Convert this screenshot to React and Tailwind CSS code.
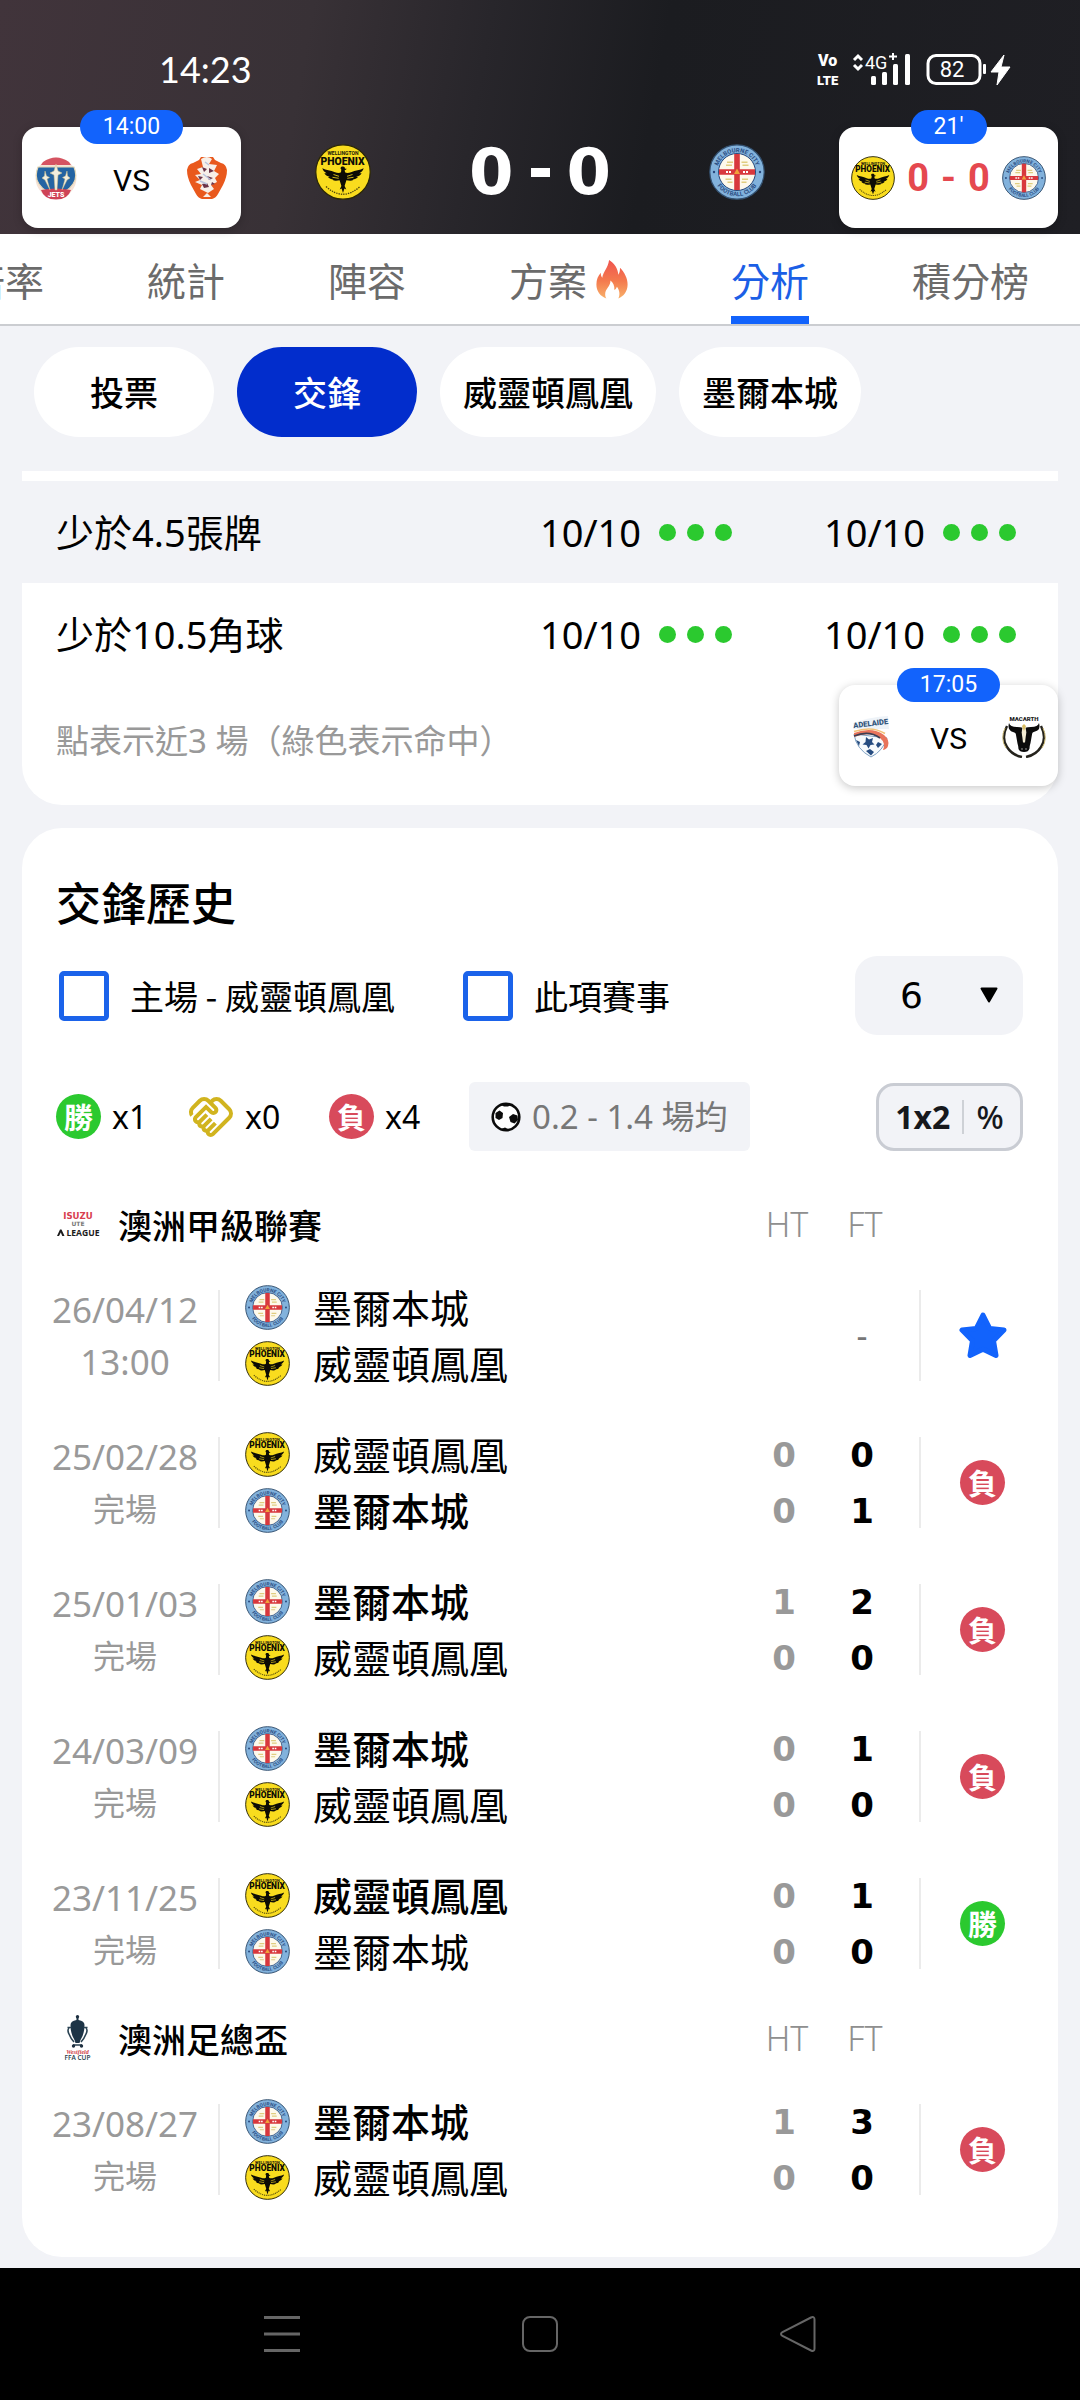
import React from 'react';
import { MdOutlineHandshake } from 'react-icons/md';

const CJK = "font-['Noto_Sans_CJK_TC',sans-serif]";
const MIX = "font-['Noto_Sans','Noto_Sans_CJK_TC',sans-serif]";

function PhoenixLogo({ className }) {
  return (
    <svg viewBox="0 0 56 56" className={className} role="img" aria-label="威靈頓鳳凰">
      <circle cx="28" cy="28" r="27.2" fill="#f9dc1e" stroke="#2b2705" strokeWidth="1.2" />
      <text x="28" y="11" textAnchor="middle" fontFamily="Roboto, sans-serif" fontWeight="700" fontSize="5" fill="#17150a">WELLINGTON</text>
      <text x="27.500" y="20.500" textAnchor="middle" fontFamily="Roboto, sans-serif" fontWeight="900" fontSize="10.400" fill="#0d0c05">PHOENIX</text>
      <path fill="#0d0c05" d="M28 22.5c1.2 0 2 .9 1.9 2 .8.3 1.5.3 1.8.3-.4.9-1.1 1.3-2 1.3l.3 2.2c1.5 1 3.600.8 6-.1 4.500-1.700 9-2.100 12.700-3.900-.6 2.300-2.200 3.900-4.400 4.900.9 0 1.700-.1 2.300-.3-.9 2.100-2.800 3.300-5.300 3.900.6.2 1.200.2 1.700.1-1.200 1.700-3.200 2.300-5.500 2.300.4.300.8.400 1.200.5-2.300 1.500-5 .9-7.300.5L29.600 42l1.700 3.500-1.900-.9L28 49l-1.400-4.400-1.900.9 1.700-3.500-1.800-5.800c-2.300.4-5 1-7.300-.5.4-.1.8-.2 1.200-.5-2.300 0-4.300-.6-5.500-2.300.5.100 1.100.1 1.700-.1-2.500-.6-4.400-1.800-5.300-3.900.6.200 1.400.3 2.300.3-2.200-1-3.800-2.600-4.400-4.900 3.700 1.800 8.200 2.200 12.700 3.900 2.400.9 4.500 1.100 6 .1l.3-2.800c-.6-.3-.7-.8-.7-1.300 0-1.100.9-1.700 1.900-1.700Z" />
      <path d="M18.500 30.500l5.500 1.800M17.500 33.300l6.200 1M37.500 30.500l-5.500 1.800M38.500 33.300l-6.200 1" stroke="#f9dc1e" strokeWidth=".8" />
      <path d="M11 42.500Q28 58 45 42.500" fill="none" stroke="#4d450c" strokeWidth="1.300" strokeDasharray="1.400 1" />
    </svg>
  );
}

function CityLogo({ className }) {
  return (
    <svg viewBox="0 0 56 56" className={className} role="img" aria-label="墨爾本城">
      <defs>
        <path id="city-top" d="M8.200 28a19.800 19.800 0 0 1 39.600 0" />
        <path id="city-bottom" d="M3.900 28a24.100 24.100 0 0 0 48.200 0" />
      </defs>
      <circle cx="28" cy="28" r="27.200" fill="#82b2dc" stroke="#33506f" strokeWidth="1.200" />
      <text fontFamily="Roboto, sans-serif" fontWeight="700" fontSize="6" fill="#2c4f84" textAnchor="middle">
        <textPath href="#city-top" startOffset="50%">MELBOURNE CITY</textPath>
      </text>
      <text fontFamily="Roboto, sans-serif" fontWeight="700" fontSize="6" fill="#2c4f84" textAnchor="middle">
        <textPath href="#city-bottom" startOffset="50%">FOOTBALL CLUB</textPath>
      </text>
      <circle cx="28" cy="28" r="18.500" fill="#fdf9ec" stroke="#27477b" strokeWidth="1" />
      <path d="M18 17.500h6v1.500h-6zM17 20.500h6v1.500h-6zM32.500 17.500h6v1.500h-6zM33.500 20.500h6v1.500h-6zM16.500 34.500h6v1.500h-6zM18.500 37.500h5v1.500h-5zM33 34.500h6v1.500h-6zM32.500 37.500h5v1.500h-5z" fill="#e0cd7f" />
      <path d="M25.200 10h5.600v36h-5.600zM10 25.300h36v5.400H10z" fill="#d8383d" />
      <path d="M28 24.500l3 5.500h-6z" fill="#f0a23a" />
      <path d="M17 28h5M34 28h5" stroke="#fff" strokeWidth="2" strokeDasharray="2 1" />
      <circle cx="5" cy="28" r="1.200" fill="#27477b" />
      <circle cx="51" cy="28" r="1.200" fill="#27477b" />
    </svg>
  );
}

function JetsLogo({ className }) {
  return (
    <svg viewBox="0 0 44 44" className={className} role="img" aria-label="Newcastle Jets">
      <circle cx="22" cy="22" r="20.500" fill="#f6e3d6" />
      <path d="M9 6Q22-3 35 6l2 3H7z" fill="#d55362" />
      <path d="M4 11h36q4 10-1 17-6 9-17 9T5 28Q0 21 4 11Z" fill="#2464a3" stroke="#e5d9b8" strokeWidth="1.200" />
      <path d="M7 34q15-3 30 0-3 9.500-15 9.500T7 34Z" fill="#cf4357" />
      <text x="22" y="41" textAnchor="middle" fontFamily="Roboto, sans-serif" fontWeight="900" fontSize="7" fill="#fff">JETS</text>
      <path d="M22 8l2 7 4 2-4 2-1 15h-2l-1-15-4-2 4-2zM11 15l1.500 5 3 1.500-2.500 1.500 3 11-5-10-3-2 2.500-2zM33 15l-1.500 5-3 1.500 2.500 1.500-3 11 5-10 3-2-2.500-2z" fill="#f3efdf" stroke="#d5c38b" strokeWidth=".5" />
    </svg>
  );
}

function RoarLogo({ className }) {
  return (
    <svg viewBox="0 0 44 44" className={className} role="img" aria-label="Brisbane Roar">
      <path d="M16 1h12l2 3 6 3q5 1 6 7 0 7-4 15l-5 9q-2 4-6 5H17q-4-1-6-5l-5-9Q2 21 2 14q1-6 6-7l6-3z" fill="#e9591d" />
      <path d="M16 3q6-4 11 0l-3 5 8 1-3 6 5 3-4 4 2 4-6 3 3 4-6 4-8-4 2-4-7-3 5-2-5-5 6-1-4-5 6-2z" fill="#f7efe8" />
      <path d="M17 11l5 2-3 3zM24 12l5 3-5 2zM13 20l5 1-3 3zM22 20l6 2-4 2zM17 28l5-1 2 4-5 1zM27 26l3 2-4 1z" fill="#6b3347" />
      <path d="M20 6l4 3M18 18l8 6M15 25l7 3" stroke="#b9c4dc" strokeWidth="1.500" />
      <path d="M18 41l4-4 4 4z" fill="#f7efe8" />
    </svg>
  );
}

function AdelaideLogo({ className }) {
  return (
    <svg viewBox="0 0 44 44" className={className} role="img" aria-label="Adelaide United">
      <path d="M2 9q17-6 35-7l1 13H4z" fill="#eef3f8" />
      <text x="20" y="12" textAnchor="middle" transform="rotate(-7 20 12)" fontFamily="Roboto, sans-serif" fontWeight="900" fontSize="7.600" fill="#33577c">ADELAIDE</text>
      <path d="M3 20q2 15 17 23 12-6 16-19z" fill="#f7fafc" stroke="#7fa2c4" strokeWidth="1" />
      <path d="M3 19q18-7 30 2 6 5 4 11-1 3-5 4 3-7-3-12-10-7-26-1z" fill="#e8745b" />
      <path d="M3 22q15-6 26 2" fill="none" stroke="#3a3f55" strokeWidth="1.600" />
      <path d="M3 17.500q18-6 31 2" fill="none" stroke="#f2c37a" strokeWidth="1.600" />
      <path d="M15 23l3 2.500 4-1.500-1 4 2.500 2.500-4 .5-2 3.500-2-3.500-4-.5 3-2.500zM5 26l4 2-1 4zM27 28l4 2-4 4-2-3zM15 37l4-2 4 3-3 3.500z" fill="#264c80" />
    </svg>
  );
}

function BullLogo({ className }) {
  return (
    <svg viewBox="0 0 44 44" className={className} role="img" aria-label="Macarthur FC">
      <text x="22" y="6.500" textAnchor="middle" fontFamily="Roboto, sans-serif" fontWeight="900" fontSize="6" fill="#222">MACARTH</text>
      <path d="M5 12Q-1 24 5 33q5 8 15 10M39 12q6 12 0 21-5 8-15 10" fill="none" stroke="#25231c" strokeWidth="2.400" />
      <path d="M3 14Q-2 25 4 34M41 14q5 11-1 20" fill="none" stroke="#c9b773" strokeWidth="1" />
      <path d="M7 9q1 4 8 4 3 0 7 1 4-1 7-1 7 0 8-4 2 7-4 8.500-3 .5-3 3l-1.500 8.500q-1 3-1 5.500-1 3.500-5.500 3.500T16.500 35q0-2.500-1-5.500L14 21q0-2.500-3-3Q5 16 7 9Z" fill="#0b0b0b" />
      <path d="M20.500 12.500h3l.8 6-1.300 10h-2l-1.300-10z" fill="#f4ecd4" />
      <path d="M20 12l2-2 2 2-2 5z" fill="#d8bd62" />
      <circle cx="20" cy="35" r=".9" fill="#777" />
      <circle cx="24" cy="35" r=".9" fill="#777" />
    </svg>
  );
}

function ALeagueLogo() {
  return (
    <svg viewBox="0 0 45 45" className="size-[45px]" role="img" aria-label="A-League">
      <text x="22" y="17" textAnchor="middle" fontFamily="'DejaVu Sans', sans-serif" fontWeight="700" fontSize="8.600" fill="#d8404f">ISUZU</text>
      <text x="22" y="23.500" textAnchor="middle" fontFamily="'DejaVu Sans', sans-serif" fontSize="6" fill="#777">UTE</text>
      <path d="M1 34l3-6.500h1.500L8.500 34H6.300l-1.500-3.500L3 34z" fill="#1c1c1c" />
      <text x="27" y="34" textAnchor="middle" fontFamily="'Open Sans', sans-serif" fontWeight="700" fontSize="8.600" fill="#1c1c1c">LEAGUE</text>
    </svg>
  );
}

function CupLogo() {
  return (
    <svg viewBox="0 0 45 47" className="h-[47px] w-[45px]" role="img" aria-label="FFA Cup">
      <circle cx="21.500" cy="1.800" r="1.700" fill="#1d2f40" />
      <path d="M20.500 3h2v2q6 1 6 5 0 9-4 15l-1 3h-4l-1-3q-4-6-4-15 0-4 6-5z" fill="#1d3446" />
      <path d="M13 13q-2 2 0 6 2 5 5 8M30 13q2 2 0 6-2 5-5 8" fill="none" stroke="#2b4353" strokeWidth="1.600" />
      <path d="M11.500 12.500h4M27.500 12.500h4M17 30h9" stroke="#2b4353" strokeWidth="1.400" />
      <circle cx="17.500" cy="31" r="1.700" fill="#1d2f40" />
      <circle cx="25.500" cy="31" r="1.700" fill="#1d2f40" />
      <text x="21.500" y="38.500" textAnchor="middle" fontFamily="'Liberation Serif', serif" fontStyle="italic" fontWeight="700" fontSize="6" fill="#cf3a45">Westfield</text>
      <text x="21.500" y="45" textAnchor="middle" fontFamily="'Open Sans', sans-serif" fontWeight="600" fontSize="6.500" fill="#243748">FFA CUP</text>
    </svg>
  );
}

function Flame() {
  return (
    <svg viewBox="0 0 32 40" className="h-[39px] w-[32px]" aria-hidden="true">
      <defs>
        <linearGradient id="flame" x1="0" y1="0" x2="0" y2="1">
          <stop offset="0" stopColor="#f0544f" />
          <stop offset=".55" stopColor="#f47b4e" />
          <stop offset="1" stopColor="#f8b06a" />
        </linearGradient>
      </defs>
      <path fill="url(#flame)" d="M13 0c6 4 9 9 9.500 15 1.200-1.500 1.800-4 1.700-7C29 13 32 19 32 25c0 7-4 12-9.500 14.500 2-4 1.300-8.500-1.500-12-.7 2-1.500 2.800-2.600 3.200.4-4.500-1.200-7.500-4-9.700.3 6-5.400 8.500-5.400 14 0 1.800.5 3.200 1.300 4.500C4 37 0 32 0 25c0-5 1.800-9 4.500-12 0 2.400.5 4 1.500 5.200C7 12 12 8 13 0Z" />
    </svg>
  );
}

function StatusIcons() {
  return (
    <svg viewBox="0 -8 196 50" className="h-[50px] w-[196px]" role="img" aria-label="VoLTE 4G+ 82%">
      <g fill="#fff" fontFamily="Roboto, sans-serif">
        <text x="1" y="14" fontSize="16" fontWeight="900">Vo</text>
        <text x="0" y="33" fontSize="13" fontWeight="900">LTE</text>
        <text x="48" y="17" fontSize="18">4G</text>
        <text x="135" y="25" fontSize="22" textAnchor="middle">82</text>
        <path d="M75 3.500V1h2v2.500h3v2h-3V8h-2V5.500h-3v-2z" />
        <rect x="54" y="24" width="5" height="9" rx="1.500" />
        <rect x="65" y="20" width="5" height="13" rx="1.500" />
        <rect x="76" y="12" width="5" height="21" rx="1.500" />
        <rect x="88" y="2" width="5" height="31" rx="1.500" />
        <rect x="166" y="12" width="3" height="10" rx="1" />
        <path d="M187 3l-13 17h8l-2 13 13-18h-9z" strokeLinejoin="round" stroke="#fff" strokeWidth="1" />
      </g>
      <path d="M37 8l4-4 4 4M37 13l4 4 4-4" fill="none" stroke="#fff" strokeWidth="3" />
      <rect x="111" y="3.500" width="52" height="28" rx="8" fill="none" stroke="#fff" strokeWidth="3" />
    </svg>
  );
}

function Football() {
  return (
    <svg viewBox="0 0 30 30" className="size-[30px]" aria-hidden="true">
      <circle cx="15" cy="15" r="13.300" fill="#fff" stroke="#0b0b0b" strokeWidth="2.600" />
      <path d="M4.500 11l4-2.500 3.500 2.500-.5 5-3.500 2-3.500-2zM18 15l4-3 4.500 1.500.5 4.500-3.500 3.500-4-1.500zM9 2.500q6-2.500 12 0l-4 2h-4zM10 27l4-1.500 4 2-4 1.500z" fill="#0b0b0b" />
    </svg>
  );
}

function FloatingMatch({ label, left, right, live, className }) {
  return (
    <button type="button" className={`absolute w-[219px] ${className}`}>
      <span className="relative z-10 mx-auto flex h-[34px] w-fit min-w-[76px] items-center justify-center rounded-full bg-[#1263fc] px-[23px] font-['Roboto',sans-serif] text-[23px] leading-[34px] text-white">
        {label}
      </span>
      <span className="-mt-[17px] flex h-[101px] items-center justify-between rounded-[16px] bg-white px-[12px] shadow-[0_2px_10px_rgba(0,0,0,0.22)]">
        {left}
        {live ? (
          <span className="flex items-center gap-[12px] font-['Roboto',sans-serif] text-[38px] leading-[44px] font-bold text-[#e5484f]">
            <span>0</span>
            <span>-</span>
            <span>0</span>
          </span>
        ) : (
          <span className="pt-[6px] font-['Roboto',sans-serif] text-[30px] leading-[44px] text-black">VS</span>
        )}
        {right}
      </span>
    </button>
  );
}

const TABS = ['倍率', '統計', '陣容', '方案', '分析', '積分榜'];
const CHIPS = ['投票', '交鋒', '威靈頓鳳凰', '墨爾本城'];

function Dots() {
  return (
    <span className="flex gap-[11px]">
      <i className="size-[17px] rounded-full bg-[#2bc92f]" />
      <i className="size-[17px] rounded-full bg-[#2bc92f]" />
      <i className="size-[17px] rounded-full bg-[#2bc92f]" />
    </span>
  );
}

function RatioCell() {
  return (
    <td className="w-[284px] p-0">
      <div className="flex items-center justify-end gap-[18px] pr-[42px]">
        <span>10/10</span>
        <Dots />
      </div>
    </td>
  );
}

const LEAGUES = [
  {
    name: '澳洲甲級聯賽',
    Logo: ALeagueLogo,
    rows: [
      { date: '26/04/12', state: '13:00', teams: ['C', 'P'], win: -1, ht: null, ft: null, res: 'star' },
      { date: '25/02/28', state: '完場', teams: ['P', 'C'], win: 1, ht: [0, 0], ft: [0, 1], res: '負' },
      { date: '25/01/03', state: '完場', teams: ['C', 'P'], win: 0, ht: [1, 0], ft: [2, 0], res: '負' },
      { date: '24/03/09', state: '完場', teams: ['C', 'P'], win: 0, ht: [0, 0], ft: [1, 0], res: '負' },
      { date: '23/11/25', state: '完場', teams: ['P', 'C'], win: 0, ht: [0, 0], ft: [1, 0], res: '勝' },
    ],
  },
  {
    name: '澳洲足總盃',
    Logo: CupLogo,
    rows: [{ date: '23/08/27', state: '完場', teams: ['C', 'P'], win: 0, ht: [1, 0], ft: [3, 0], res: '負' }],
  },
];

function ResultBadge({ value }) {
  return (
    <span
      className={`flex size-[45px] shrink-0 items-center justify-center rounded-full ${CJK} text-[29px] leading-[45px] font-bold text-white ${
        value === '勝' ? 'bg-[#2bc92f]' : 'bg-[#d84a5b]'
      }`}
    >
      {value}
    </span>
  );
}

function Star() {
  return (
    <svg viewBox="0 0 48 48" className="size-[48px]" role="img" aria-label="收藏">
      <path d="M24 3l6.800 13.500 14.200 1.500-10.500 10.700 2.500 14.800L24 37.200 11 43.500l2.500-14.800L3 18l14.200-1.500z" fill="#1263fc" stroke="#1263fc" strokeWidth="5" strokeLinejoin="round" />
    </svg>
  );
}

function Scores({ values, className }) {
  return (
    <div className={`flex flex-col items-center font-['DejaVu_Sans',sans-serif] text-[34px] leading-[56px] font-bold ${className}`}>
      <span>{values[0]}</span>
      <span>{values[1]}</span>
    </div>
  );
}

function MatchRow({ match }) {
  return (
    <tr className="h-[147px]">
      <td className="p-0">
        <div className={`flex h-[91px] flex-col items-center justify-center border-r-2 border-[#ebebeb] ${MIX} text-[35px] leading-[52px] text-[#999]`}>
          <span>{match.date}</span>
          <span className={match.state === '完場' ? 'text-[32px]' : ''}>{match.state}</span>
        </div>
      </td>
      <td className="p-0">
        <div className="flex flex-col pl-[25px]">
          {match.teams.map((t, i) => (
            <div key={t} className="flex h-[56px] items-center gap-[23px]">
              {t === 'C' ? <CityLogo className="size-[45px]" /> : <PhoenixLogo className="size-[45px]" />}
              <span className={`${CJK} pb-[4px] text-[39px] leading-[52px] whitespace-nowrap text-black ${i === match.win ? 'font-medium' : 'font-normal'}`}>
                {t === 'C' ? '墨爾本城' : '威靈頓鳳凰'}
              </span>
            </div>
          ))}
        </div>
      </td>
      <td className="p-0">{match.ht && <Scores values={match.ht} className="text-[#999]" />}</td>
      <td className="p-0 text-center">
        {match.ft ? <Scores values={match.ft} className="text-black" /> : <span className={`${MIX} text-[34px] text-[#777]`}>-</span>}
      </td>
      <td className="p-0">
        <div className="ml-[18px] flex h-[91px] items-center justify-center border-l-2 border-[#ebebeb]">
          {match.res === 'star' ? <Star /> : <ResultBadge value={match.res} />}
        </div>
      </td>
    </tr>
  );
}

function LeagueTable({ league }) {
  const { Logo } = league;
  return (
    <table className="w-full table-fixed border-collapse">
      <colgroup>
        <col className="w-[188px]" />
        <col />
        <col className="w-[78px]" />
        <col className="w-[78px]" />
        <col className="w-[143px]" />
      </colgroup>
      <thead>
        <tr className="h-[75px]">
          <th colSpan={2} className="p-0 text-left">
            <div className="flex items-center gap-[17px] pl-[24px]">
              <Logo />
              <span className={`${CJK} text-[34px] leading-[50px] font-medium text-black`}>{league.name}</span>
            </div>
          </th>
          <th className={`p-0 pl-[6px] text-center ${MIX} text-[34px] font-light text-[#8f8f8f]`}>HT</th>
          <th className={`p-0 pl-[6px] text-center ${MIX} text-[34px] font-light text-[#8f8f8f]`}>FT</th>
          <th className="p-0" />
        </tr>
      </thead>
      <tbody>
        {league.rows.map((m) => (
          <MatchRow key={m.date} match={m} />
        ))}
      </tbody>
    </table>
  );
}

export default function App() {
  return (
    <div className={`relative min-h-[2400px] w-full overflow-hidden bg-[#f2f3f7] text-black ${MIX}`}>
      <header className="bg-[linear-gradient(100deg,#41343b_0%,#383136_28%,#28262b_44%,#1b1c20_60%,#1f1f24_100%)]">
        <div className="flex h-[138px] items-center justify-between pr-[67px] pl-[159px]">
          <span className="font-['Lato',sans-serif] text-[36px] leading-[40px] text-white">14:23</span>
          <StatusIcons />
        </div>
        <div className="flex h-[96px] items-center justify-center gap-[98px] pb-[28px]">
          <PhoenixLogo className="size-[56px]" />
          <div className="flex w-[142px] items-center justify-between font-['DejaVu_Sans',sans-serif] text-[64px] leading-[68px] font-bold text-white">
            <span>0</span>
            <i className="h-[9px] w-[19px] bg-white" />
            <span>0</span>
          </div>
          <CityLogo className="size-[56px]" />
        </div>
      </header>

      <FloatingMatch label="14:00" left={<JetsLogo className="size-[44px]" />} right={<RoarLogo className="size-[44px]" />} className="top-[110px] left-[22px]" />
      <FloatingMatch label="21'" live left={<PhoenixLogo className="size-[44px]" />} right={<CityLogo className="size-[44px]" />} className="top-[110px] right-[22px]" />
      <FloatingMatch label="17:05" left={<AdelaideLogo className="size-[44px]" />} right={<BullLogo className="size-[44px]" />} className="top-[668px] right-[22px]" />

      <nav className="overflow-hidden border-b-2 border-[#cbcdd1] bg-white">
        <div className="-ml-[34px] flex h-[90px] items-stretch gap-[103px]">
          {TABS.map((tab) => (
            <button
              key={tab}
              type="button"
              className={`flex shrink-0 items-center gap-[9px] border-y-8 border-t-transparent ${CJK} text-[39px] leading-[60px] font-normal whitespace-nowrap ${
                tab === '分析' ? 'border-b-[#1263fc] text-[#1b5fe6]' : 'border-b-transparent text-[#6b6b6b]'
              }`}
            >
              {tab}
              {tab === '方案' && <Flame />}
            </button>
          ))}
        </div>
      </nav>

      <div className="flex gap-[23px] px-[34px] pt-[21px]">
        {CHIPS.map((chip) => (
          <button
            key={chip}
            type="button"
            className={`h-[90px] min-w-[180px] rounded-full px-[23px] ${CJK} text-[34px] leading-[50px] font-medium whitespace-nowrap ${
              chip === '交鋒' ? 'bg-[#022dcc] text-white' : 'bg-white text-black'
            }`}
          >
            {chip}
          </button>
        ))}
      </div>

      <main className="flex flex-col gap-[23px] px-[22px] pt-[34px]">
        <section className="rounded-b-[40px] bg-white pt-[10px]">
          <table className="w-full table-fixed border-collapse text-[38px] leading-[52px]">
            <tbody>
              <tr className="h-[102px] bg-[#f2f3f7]">
                <th scope="row" className="p-0 pl-[34px] text-left font-normal">少於4.5張牌</th>
                <RatioCell />
                <RatioCell />
              </tr>
              <tr className="h-[102px]">
                <th scope="row" className="p-0 pl-[34px] text-left font-normal">少於10.5角球</th>
                <RatioCell />
                <RatioCell />
              </tr>
            </tbody>
          </table>
          <p className="px-[34px] pt-[31px] pb-[39px] text-[33px] leading-[50px] text-[#999]">點表示近3 場（綠色表示命中）</p>
        </section>

        <section className="rounded-[40px] bg-white pb-[34px]">
          <h2 className={`px-[34px] pt-[44px] ${CJK} text-[45px] leading-[60px] font-medium`}>交鋒歷史</h2>
          <div className="flex items-center pt-[24px] pr-[35px] pl-[37px]">
            <label className={`flex items-center gap-[21px] ${CJK} text-[34px] leading-[50px]`}>
              <input type="checkbox" className="size-[50px] appearance-none rounded-[5px] border-5 border-[#1b63ea] bg-white" />
              主場 - 威靈頓鳳凰
            </label>
            <label className={`ml-[68px] flex items-center gap-[21px] ${CJK} text-[34px] leading-[50px]`}>
              <input type="checkbox" className="size-[50px] appearance-none rounded-[5px] border-5 border-[#1b63ea] bg-white" />
              此項賽事
            </label>
            <div className="relative ml-auto">
              <select aria-label="場數" defaultValue="6" className="h-[79px] w-[168px] appearance-none rounded-[22px] bg-[#f2f3f7] pl-[45px] font-['DejaVu_Sans',sans-serif] text-[36px] text-black">
                <option value="6">6</option>
                <option value="10">10</option>
              </select>
              <svg viewBox="0 0 18 16" className="pointer-events-none absolute top-[31px] right-[25px] h-[16px] w-[18px]" aria-hidden="true">
                <path d="M1.500 1.500h15L9 14.500z" fill="#000" stroke="#000" strokeWidth="2" strokeLinejoin="round" />
              </svg>
            </div>
          </div>

          <div className="flex items-center pt-[47px] pr-[35px] pl-[34px] text-[32px] leading-[48px]">
            <span className="flex w-[131px] items-center gap-[11px]"><ResultBadge value="勝" />x1</span>
            <span className="flex w-[142px] items-center gap-[10px]"><MdOutlineHandshake className="size-[48px] text-[#d1b41f]" />x0</span>
            <span className="flex w-[140px] items-center gap-[11px]"><ResultBadge value="負" />x4</span>
            <span className="flex h-[69px] items-center gap-[11px] rounded-[6px] bg-[#f2f3f7] px-[22px] text-[33px] whitespace-nowrap text-[#777]">
              <Football />
              0.2 - 1.4 場均
            </span>
            <button type="button" className="ml-auto flex h-[68px] w-[147px] items-center justify-center gap-[12px] rounded-[18px] border-3 border-[#c9ccd3] bg-[#f2f3f7] text-[32px] font-bold text-[#16181c]">
              1x2
              <i className="h-[34px] w-[2px] bg-[#ced1d6]" />
              <span className="font-medium">%</span>
            </button>
          </div>

          <div className="flex flex-col gap-[4px] pt-[36px] pr-[14px] pl-[10px]">
            {LEAGUES.map((league) => (
              <LeagueTable key={league.name} league={league} />
            ))}
          </div>
        </section>
      </main>

      <footer className="mt-[11px] flex h-[132px] items-center justify-center gap-[222px] bg-black">
        <button type="button" aria-label="多工">
          <svg viewBox="0 0 36 36" className="size-[36px]"><path d="M0 1.500h36M0 18h36M0 34.500h36" stroke="#666" strokeWidth="3" /></svg>
        </button>
        <button type="button" aria-label="主畫面">
          <svg viewBox="0 0 36 36" className="size-[36px]"><rect x="1" y="1" width="34" height="34" rx="7" fill="none" stroke="#666" strokeWidth="2" /></svg>
        </button>
        <button type="button" aria-label="返回">
          <svg viewBox="0 0 36 36" className="size-[36px]"><path d="M31 1.500Q34.500 0 34.500 3.500v29q0 3.500-3.500 2L2.500 20q-3-2 0-4z" fill="none" stroke="#666" strokeWidth="2" /></svg>
        </button>
      </footer>
    </div>
  );
}
